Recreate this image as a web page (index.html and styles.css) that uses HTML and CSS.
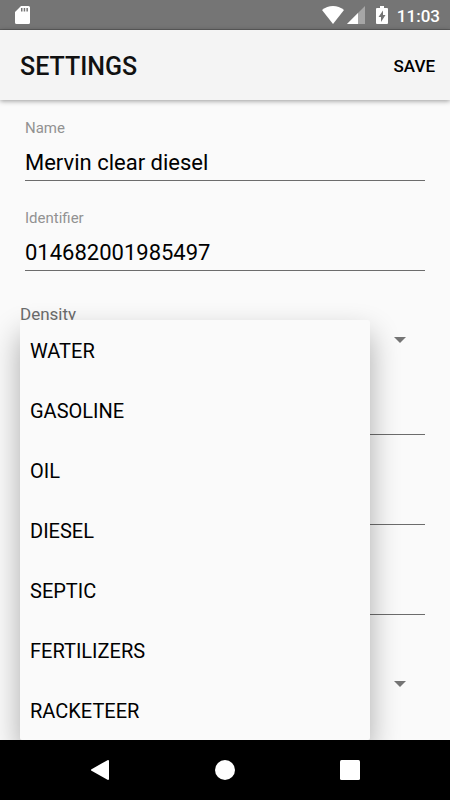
FILE: index.html
```html
<!DOCTYPE html>
<html lang="en">
<head>
    <meta charset="UTF-8">
    <meta name="viewport" content="width=device-width, initial-scale=1.0">
    <title>Settings</title>
    <link rel="stylesheet" href="styles.css">
</head>
<body>
    <div class="status-bar">
        <svg class="sd-icon" width="15" height="18" viewBox="0 0 15 18" fill="#fff">
            <path fill-rule="evenodd" d="M6 0h7.500q1.500 0 1.500 1.500v15q0 1.500-1.500 1.500h-12Q0 18 0 16.500V6zM6 2v3.500h1.500V2zM8.700 2v3.500h1.500V2zM11.400 2v3.500h1.500V2z"/>
        </svg>
        <svg class="wifi-icon" width="22" height="18" viewBox="0 0 22 18" fill="#fff">
            <path d="M0 4Q5 0 11 0t11 4L11 18z"/>
        </svg>
        <svg class="signal-icon" width="18" height="18" viewBox="0 0 18 18">
            <path d="M18 0v18H0z" fill="#a6a6a6"/>
            <path d="M11 7v11H0z" fill="#fff"/>
        </svg>
        <svg class="battery-icon" width="12" height="18" viewBox="0 0 12 18" fill="#fff">
            <path fill-rule="evenodd" d="M4 0h4v2h3q1 0 1 1v14q0 1-1 1H1q-1 0-1-1V3q0-1 1-1h3zM7 4.500L2.500 11H5v5l4.500-7H7z"/>
        </svg>
        <span class="clock">11:03</span>
    </div>

    <header class="app-bar">
        <h1>SETTINGS</h1>
        <button type="submit" form="settingsForm" class="save-btn">SAVE</button>
    </header>

    <main>
        <form id="settingsForm">
            <div class="field">
                <label for="name">Name</label>
                <input type="text" id="name" value="Mervin clear diesel">
            </div>
            <div class="field">
                <label for="identifier">Identifier</label>
                <input type="text" id="identifier" value="014682001985497">
            </div>

            <div class="spinner">
                <label for="density">Density</label>
                <div class="select-box">
                    <select id="density"></select>
                    <svg class="arrow" width="12" height="6" viewBox="0 0 12 6"><path d="M0 0h12L6 6z" fill="#757575"/></svg>
                </div>
                <div class="menu">
                    <button type="button">WATER</button>
                    <button type="button">GASOLINE</button>
                    <button type="button">OIL</button>
                    <button type="button">DIESEL</button>
                    <button type="button">SEPTIC</button>
                    <button type="button">FERTILIZERS</button>
                    <button type="button">RACKETEER</button>
                </div>
            </div>

            <div class="field no-label">
                <input type="text" id="height" aria-label="Height">
            </div>
            <div class="field no-label">
                <input type="text" id="width" aria-label="Width">
            </div>
            <div class="field no-label">
                <input type="text" id="length" aria-label="Length">
            </div>

            <div class="spinner no-label">
                <div class="select-box">
                    <select id="unit" aria-label="Unit"></select>
                    <svg class="arrow" width="12" height="6" viewBox="0 0 12 6"><path d="M0 0h12L6 6z" fill="#757575"/></svg>
                </div>
            </div>
        </form>
    </main>

    <nav class="nav-bar">
        <button type="button" aria-label="Back">
            <svg width="20" height="20" viewBox="0 0 20 20"><path d="M2 10L18 1v18z" fill="#fff" stroke="#fff" stroke-width="2" stroke-linejoin="round"/></svg>
        </button>
        <button type="button" aria-label="Home">
            <svg width="20" height="20" viewBox="0 0 20 20"><circle cx="10" cy="10" r="10" fill="#fff"/></svg>
        </button>
        <button type="button" aria-label="Recent apps">
            <svg width="20" height="20" viewBox="0 0 20 20"><rect width="20" height="20" rx="1.500" fill="#fff"/></svg>
        </button>
    </nav>
</body>
</html>
```
FILE: styles.css
```css
* {
    box-sizing: border-box;
}

body {
    font-family: Roboto, sans-serif;
    background: #fafafa;
    color: #000;
    margin: 0;
    display: flex;
    flex-direction: column;
    min-height: 100vh;
}

button,
input,
select {
    font-family: inherit;
    color: inherit;
    background: none;
    border: none;
    padding: 0;
}

button {
    cursor: pointer;
}

.status-bar {
    display: flex;
    align-items: center;
    height: 30px;
    padding: 0 10px 0 15px;
    background: #757575;
    border-bottom: 1px solid #5f5f5f;
    color: #fff;
}

.wifi-icon {
    margin-left: auto;
}

.signal-icon {
    margin-left: 3px;
}

.battery-icon {
    margin: 0 9px 0 11px;
}

.clock {
    font-size: 17px;
    font-weight: 500;
    line-height: 30px;
    padding-top: 2px;
}

.app-bar {
    position: relative;
    display: flex;
    align-items: center;
    justify-content: space-between;
    height: 70px;
    padding: 2px 15px 0 20px;
    background: #f4f4f4;
    box-shadow: 0 1px 5px rgba(0, 0, 0, 0.4);
}

h1 {
    margin: 0;
    font-size: 25px;
    font-weight: 500;
    color: #111;
}

.save-btn {
    font-size: 17px;
    font-weight: 500;
}

main {
    flex: 1;
    overflow: hidden;
    padding: 18px 20px 0;
}

.field {
    margin: 0 5px 27px;
}

.field label {
    display: block;
    font-size: 15px;
    line-height: 20px;
    color: #929292;
}

.field input {
    display: block;
    width: 100%;
    height: 43px;
    padding: 12px 0 5px;
    border-bottom: 1px solid #6c6c6c;
    border-radius: 0;
    font-size: 22px;
    outline: none;
}

.no-label {
    padding-top: 20px;
}

.spinner {
    position: relative;
    margin: 33px 0 16px;
}

.spinner label {
    display: block;
    font-size: 17px;
    line-height: 20px;
    color: #6c6c6c;
}

.select-box {
    display: flex;
    align-items: center;
    height: 32px;
    padding-right: 24px;
}

.select-box select {
    flex: 1;
    height: 32px;
    font-size: 20px;
    appearance: none;
    outline: none;
}

.menu {
    position: absolute;
    top: 16px;
    left: 0;
    right: 60px;
    z-index: 1;
    background: #fafafa;
    border-radius: 2px;
    box-shadow: 0 14px 30px rgba(0, 0, 0, 0.32);
}

.menu button {
    display: block;
    width: 100%;
    height: 60px;
    padding: 2px 10px 0;
    font-size: 20px;
    text-align: left;
}

.nav-bar {
    position: relative;
    z-index: 2;
    display: flex;
    justify-content: center;
    gap: 65px;
    height: 60px;
    background: #000;
}

.nav-bar button {
    display: flex;
    align-items: center;
    justify-content: center;
    width: 60px;
}
```
